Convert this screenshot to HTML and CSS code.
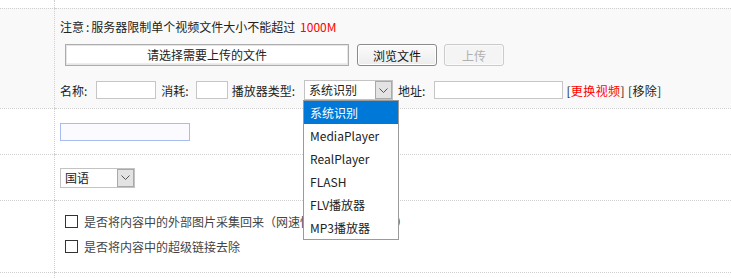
FILE: index.html
```html
<!DOCTYPE html>
<html lang="zh-CN">
<head>
    <meta charset="UTF-8">
    <title>添加视频</title>
    <link rel="stylesheet" href="styles.css">
</head>
<body>
    <table class="form-table">
        <tr class="row-spacer">
            <td class="label"></td>
            <td></td>
        </tr>

        <tr class="row-upload">
            <td class="label"></td>
            <td class="field">
                <div class="notice">注意<span class="colon">:</span>服务器限制单个视频文件大小不能超过 <span class="limit">1000M</span></div>

                <div class="upload-line">
                    <div class="file-box">请选择需要上传的文件</div>
                    <button type="button" class="btn btn-browse">浏览文件</button>
                    <button type="button" class="btn btn-upload" disabled>上传</button>
                </div>

                <div class="meta-line">
                    <span class="meta-label">名称:</span>
                    <input type="text" class="txt txt-name">
                    <span class="meta-label lbl-cost">消耗:</span>
                    <input type="text" class="txt txt-cost">
                    <span class="meta-label lbl-player">播放器类型:</span>
                    <div class="select select-player">
                        <span class="select-value">系统识别</span>
                        <span class="select-arrow">
                            <svg width="9" height="5" viewBox="0 0 9 5"><path d="M0.5 0.5 L4.5 4.5 L8.5 0.5" fill="none" stroke="#555" stroke-width="1"/></svg>
                        </span>
                        <ul class="dropdown">
                            <li class="active">系统识别</li>
                            <li>MediaPlayer</li>
                            <li>RealPlayer</li>
                            <li>FLASH</li>
                            <li>FLV播放器</li>
                            <li>MP3播放器</li>
                        </ul>
                    </div>
                    <span class="meta-label lbl-url">地址:</span>
                    <input type="text" class="txt txt-url">
                    <span class="links">[<a href="#" class="link-red">更换视频</a>] [<a href="#">移除</a>]</span>
                </div>
            </td>
        </tr>

        <tr class="row-mid">
            <td class="label"></td>
            <td class="field">
                <input type="text" class="txt txt-title">
            </td>
        </tr>

        <tr class="row-mid">
            <td class="label"></td>
            <td class="field">
                <div class="select select-lang">
                    <span class="select-value">国语</span>
                    <span class="select-arrow">
                        <svg width="9" height="5" viewBox="0 0 9 5"><path d="M0.5 0.5 L4.5 4.5 L8.5 0.5" fill="none" stroke="#555" stroke-width="1"/></svg>
                    </span>
                </div>
            </td>
        </tr>

        <tr class="row-options">
            <td class="label"></td>
            <td class="field">
                <label class="option"><input type="checkbox"> 是否将内容中的外部图片采集回来（网速快时建议选择此项）</label>
                <label class="option"><input type="checkbox"> 是否将内容中的超级链接去除</label>
            </td>
        </tr>

        <tr class="row-end">
            <td class="label"></td>
            <td></td>
        </tr>
    </table>
</body>
</html>
```

FILE: styles.css
```css
* {
    margin: 0;
    padding: 0;
    box-sizing: border-box;
    font-family: "Noto Sans CJK SC", "Noto Sans", sans-serif;
}

body {
    background-color: #fff;
    color: #333;
    font-size: 12px;
}

.form-table {
    width: 100%;
    border-collapse: separate;
    border-spacing: 0;
}

.form-table td {
    border-top: 1px dotted #cfcfcf;
    vertical-align: middle;
}

.form-table .label {
    width: 55px;
    border-right: 1px dotted #cfcfcf;
}

.form-table .field {
    padding-left: 5px;
}

.row-spacer td {
    height: 8px;
    border-top: none !important;
}

.row-upload td {
    background-color: #f9f9f9;
}

.row-upload .field {
    padding-top: 9px;
    padding-bottom: 8px;
}

.notice {
    height: 18px;
    line-height: 18px;
    color: #222;
}

.notice .colon {
    padding: 0 2px;
}

.limit {
    color: #f00;
    margin-left: 2px;
}

.upload-line {
    display: flex;
    align-items: center;
    margin-top: 8px;
    margin-left: 5px;
}

.file-box {
    width: 284px;
    height: 22px;
    line-height: 20px;
    text-align: center;
    color: #222;
    background: #fff;
    border: 1px solid #acacac;
    box-shadow: inset 0 0 0 1px #e6e6e6, inset 0 -2px 0 #ececec;
}

.btn {
    height: 22px;
    font-size: 12px;
    border-radius: 3px;
    cursor: pointer;
}

.btn-browse {
    width: 80px;
    margin-left: 8px;
    color: #111;
    border: 1px solid #8a8a8a;
    background: linear-gradient(#fbfbfb, #ececec);
    box-shadow: inset 0 0 0 1px #fff;
}

.btn-upload {
    width: 60px;
    margin-left: 7px;
    color: #b0b0b0;
    border: 1px solid #cbcbcb;
    background: #f4f4f4;
    box-shadow: inset 0 0 0 1px #fafafa;
    cursor: default;
}

.meta-line {
    display: flex;
    align-items: center;
    height: 20px;
    margin-top: 14px;
    color: #222;
}

.txt {
    height: 18px;
    border: 1px solid #c6c6c6;
    background: #fff;
    font-size: 12px;
    outline: none;
}

.txt-name {
    width: 60px;
    margin-left: 9px;
}

.lbl-cost {
    margin-left: 5px;
}

.txt-cost {
    width: 32px;
    margin-left: 7px;
}

.lbl-player {
    margin-left: 4px;
}

.select {
    position: relative;
    display: flex;
    align-items: center;
    height: 20px;
    border: 1px solid #c3c3c3;
    background: #fff;
    color: #222;
}

.select-value {
    flex: 1;
    padding-left: 4px;
    line-height: 18px;
}

.select-arrow {
    width: 17px;
    height: 18px;
    display: flex;
    align-items: center;
    justify-content: center;
    background: #e3e3e3;
    border: 1px solid #a9a9a9;
}

.select-player {
    width: 89px;
    margin-left: 9px;
}

.dropdown {
    position: absolute;
    top: 19px;
    left: -2px;
    width: 96px;
    list-style: none;
    background: #fff;
    border: 1px solid #9a9a9a;
    z-index: 10;
}

.dropdown li {
    height: 23px;
    line-height: 23px;
    padding-left: 6px;
    color: #222;
}

.dropdown li.active {
    background: #0078d7;
    color: #fff;
}

.lbl-url {
    margin-left: 5px;
}

.txt-url {
    width: 129px;
    margin-left: 9px;
}

.links {
    margin-left: 3px;
    color: #222;
    letter-spacing: 0.4px;
}

.links a {
    color: #222;
    text-decoration: none;
}

.links .link-red {
    color: #f00;
}

.row-mid td {
    height: 46px;
}

.txt-title {
    display: block;
    width: 130px;
    border-color: #a7bdf2;
    background: #fafaff;
}

.select-lang {
    width: 75px;
}

.row-options .field {
    padding-top: 8px;
    padding-bottom: 13px;
    padding-left: 10px;
}

.option {
    display: flex;
    align-items: center;
    height: 25px;
    color: #444;
    font-size: 12px;
}

.option input {
    appearance: none;
    -webkit-appearance: none;
    width: 13px;
    height: 13px;
    margin-right: 6px;
    border: 1px solid #333;
    background: #fff;
}

.row-end td {
    height: 6px;
}
```
